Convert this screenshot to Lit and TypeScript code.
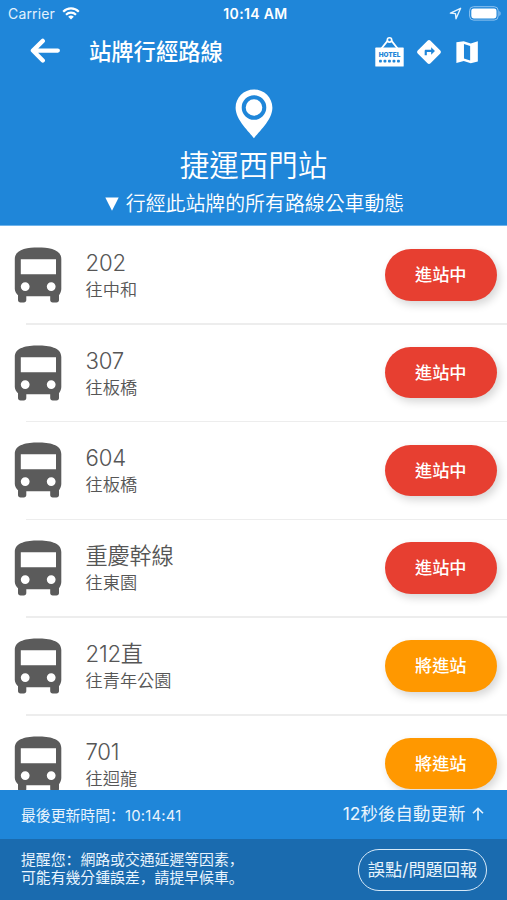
import { LitElement, html, css, svg } from "lit";
import { customElement, property } from "lit/decorators.js";

const textStack = css`Inter, "Noto Sans CJK TC", sans-serif`;

interface Route {
  name: string;
  dest: string;
  status: "arriving" | "soon";
}

const ROUTES: Route[] = [
  { name: "202", dest: "往中和", status: "arriving" },
  { name: "307", dest: "往板橋", status: "arriving" },
  { name: "604", dest: "往板橋", status: "arriving" },
  { name: "重慶幹線", dest: "往東園", status: "arriving" },
  { name: "212直", dest: "往青年公園", status: "soon" },
  { name: "701", dest: "往迴龍", status: "soon" },
];

@customElement("status-bar")
export class StatusBar extends LitElement {
  static styles = css`
    :host {
      display: grid;
      grid-template-columns: 1fr auto 1fr;
      align-items: center;
      height: 27px;
      padding: 0 6px 0 8px;
      color: #fff;
      font-family: ${textStack};
      font-size: 14px;
    }
    .left, .right { display: flex; align-items: center; }
    .left { gap: 7px; color: #e2f1fd; }
    .carrier { letter-spacing: 0.15px; }
    .right { justify-content: flex-end; gap: 7px; }
    .time { font-weight: 600; font-size: 14px; letter-spacing: 0.35px; padding-left: 2px; }
    svg { display: block; }
  `;
  render() {
    return html`
      <div class="left">
        <span class="carrier">Carrier</span>
        <svg width="18" height="13" viewBox="0 0 18 13" fill="none" stroke="#fff">
          <path d="M1.2 4.7a11 11 0 0 1 15.6 0" stroke-width="2.2" />
          <path d="M4 7.7a7.1 7.1 0 0 1 10 0" stroke-width="2.1" />
          <path d="M9 12.6 6.2 9.8a4 4 0 0 1 5.6 0Z" fill="#fff" stroke="none" />
        </svg>
      </div>
      <span class="time">10:14 AM</span>
      <div class="right">
        <svg width="13" height="13" viewBox="0 0 13 13">
          <path d="M11.6 1.3 1.4 6.1l5.1.5.5 5.1Z" fill="none" stroke="#e6f3fd" stroke-width="1.4" stroke-linejoin="round" />
        </svg>
        <svg width="32" height="15" viewBox="0 0 32 15">
          <rect x=".6" y=".7" width="28.6" height="13.4" rx="4" fill="none" stroke="#8fc3ef" stroke-width="1" />
          <rect x="2.3" y="2.4" width="25.2" height="10" rx="2.4" fill="#fff" />
          <path d="M30.3 5v5c1.8-.8 1.8-4.2 0-5Z" fill="#8fc3ef" />
        </svg>
      </div>
    `;
  }
}

@customElement("nav-bar")
export class NavBar extends LitElement {
  static styles = css`
    :host {
      display: flex;
      align-items: center;
      height: 50px;
      padding: 0 27px 0 30px;
      color: #fff;
      font-family: ${textStack};
    }
    svg { display: block; }
    .title { margin: 0 auto 0 29px; font-size: 22.3px; font-weight: 500; line-height: 30px; }
    .arrow { margin-top: -2px; }
    .actions { display: flex; align-items: center; gap: 12px; }
    .sign { font: 900 6.4px Inter, sans-serif; }
  `;
  render() {
    return html`
      <svg class="arrow" width="30" height="26" viewBox="0 0 30 26" fill="none" stroke="#fff" stroke-width="4.3" stroke-linecap="round" stroke-linejoin="round">
        <path d="M27.8 12.6H3.2M12.8 2.9 2.9 12.6l9.9 9.9" />
      </svg>
      <span class="title">站牌行經路線</span>
      <div class="actions">
        <svg width="29" height="32" viewBox="0 0 29 32">
          <path d="M6 13 12.9 4.4M23 13 16.2 4.4" stroke="#fff" stroke-width="1.8" />
          <circle cx="14.5" cy="3.9" r="2.2" fill="none" stroke="#fff" stroke-width="1.6" />
          <rect x=".3" y="11.6" width="28.4" height="19" rx=".6" fill="#fff" />
          <text class="sign" x="14.5" y="20.9" text-anchor="middle" textLength="21.6" fill="#1f86d9">HOTEL</text>
          <g fill="#1f86d9">
            ${[4, 8.5, 13, 17.5, 22].map((x) => svg`<rect x=${x} y="23.8" width="2.9" height="2.6" rx=".9" />`)}
          </g>
        </svg>
        <svg width="26" height="26" viewBox="0 0 24 24" fill="#fff">
          <path d="M22.43 10.59l-9.01-9.01c-.75-.75-2.07-.76-2.83 0l-9 9c-.78.78-.78 2.04 0 2.82l9 9c.39.39.9.58 1.41.58.51 0 1.02-.19 1.41-.58l8.98-8.98c.79-.76.8-2.02.04-2.83zM14 14.5V12h-4v3H8v-4c0-.55.45-1 1-1h5V7.500l3.500 3.500-3.500 3.500z" />
        </svg>
        <svg width="26" height="26" viewBox="0 0 24 26" preserveAspectRatio="none" fill="#fff">
          <path fill-rule="evenodd" d="M2.200 3.200 9 2.200 15.500 4.500 22 2.200V22.500L15.500 24.300 9 22 2.200 24ZM9.200 5V19.400L14.900 21.500V7Z" />
        </svg>
      </div>
    `;
  }
}

@customElement("stop-header")
export class StopHeader extends LitElement {
  static styles = css`
    :host {
      display: flex;
      flex-direction: column;
      align-items: center;
      height: 149px;
      box-sizing: border-box;
      padding-top: 11.5px;
      border-bottom: 1px solid #6fb3ea;
      color: #fff;
      font-family: ${textStack};
    }
    svg { display: block; }
    .name { margin-top: 6px; font-size: 29.5px; line-height: 40px; font-weight: 350; }
    .sub {
      display: flex;
      align-items: center;
      gap: 7px;
      margin-top: 5px;
      padding-left: 2px;
      font-size: 19.9px;
      line-height: 28px;
      font-weight: 350;
    }
  `;
  render() {
    return html`
      <svg width="38" height="50" viewBox="0 0 38 50">
        <path fill="#fff" d="M19 .4C8.700.4.600 8.500.600 18.700.600 31 15 43.500 19 49.300 23 43.500 37.400 31 37.400 18.700 37.400 8.500 29.300.4 19 .4Z" />
        <circle cx="19" cy="18.500" r="10.300" fill="#fff" stroke="#1f86d9" stroke-width="4" />
      </svg>
      <span class="name">捷運西門站</span>
      <div class="sub">
        <svg width="14" height="14" viewBox="0 0 14 14"><path d="M.3.500H13.700L7 13.800Z" fill="#fff" /></svg>
        <span>行經此站牌的所有路線公車動態</span>
      </div>
    `;
  }
}

@customElement("route-row")
export class RouteRow extends LitElement {
  @property() name = "";
  @property() dest = "";
  @property() status = "arriving";

  static styles = css`
    :host {
      display: flex;
      flex: none;
      flex-direction: column;
      height: 97.75px;
      font-family: ${textStack};
      color: #565656;
    }
    .body { display: flex; flex: 1; align-items: center; padding: 0 10px 0 14px; }
    svg { display: block; }
    .info { display: flex; flex-direction: column; flex: 1; margin-left: 23.5px; }
    .name { font-size: 22.2px; line-height: 29px; font-weight: 350; letter-spacing: -0.2px; }
    .dest { font-size: 17.2px; line-height: 25px; font-weight: 350; }
    .pill {
      width: 112.5px;
      height: 51.5px;
      border-radius: 26px;
      background: #e73f31;
      color: #fff;
      font-size: 17.2px;
      font-weight: 500;
      line-height: 51px;
      text-align: center;
      box-shadow: 3px 4px 8px rgba(0, 0, 0, 0.16);
    }
    .soon { background: #ff9800; }
    .line { height: 1.5px; margin-left: 26px; background: #ededed; }
  `;
  render() {
    return html`
      <div class="body">
        <svg width="48" height="56" viewBox="0 0 48 56">
          <path fill="#5b5b5b" fill-rule="evenodd" d="M24 .6C35 .6 47.300 2.500 47.300 12V42C47.300 44.500 46 46.700 45 48.200V53C45 54.500 44 55.500 42.500 55.500H38.700C37.200 55.500 36.200 54.500 36.200 53V49.300H12.300V53C12.300 54.500 11.300 55.500 9.800 55.500H6.500C5 55.500 4 54.500 4 53V48.200C2.500 46.700.800 44.500.800 42V12C.8 2.500 13 .6 24 .6ZM6.800 12.200V27.200H42V12.200ZM11.200 35.200a4.400 4.400 0 1 0 0 8.800a4.400 4.400 0 1 0 0-8.800ZM37.200 35.200a4.400 4.400 0 1 0 0 8.800a4.400 4.400 0 1 0 0-8.800Z" />
        </svg>
        <div class="info">
          <span class="name">${this.name}</span>
          <span class="dest">${this.dest}</span>
        </div>
        <div class="pill ${this.status}">${this.status === "soon" ? "將進站" : "進站中"}</div>
      </div>
      <div class="line"></div>
    `;
  }
}

@customElement("app-footer")
export class AppFooter extends LitElement {
  static styles = css`
    :host { display: block; color: #e9f4fd; font-family: ${textStack}; }
    .update {
      display: flex;
      align-items: center;
      justify-content: space-between;
      height: 49px;
      padding: 0 23.5px 0 21px;
      background: #1f86d9;
    }
    .last { font-size: 14.85px; }
    .clock { letter-spacing: 0.2px; }
    .next { display: flex; align-items: center; gap: 6px; font-size: 17.4px; letter-spacing: 0.1px; line-height: 24px; padding-bottom: 1px; }
    .notice {
      display: flex;
      align-items: center;
      justify-content: space-between;
      height: 61px;
      padding: 0 20px 0 21px;
      background: #1a6baf;
    }
    .text { font-size: 14.85px; line-height: 17.5px; white-space: nowrap; }
    .text div { height: 17.5px; }
    .p { font-family: "Noto Sans CJK SC", sans-serif; line-height: 1; }
    .report {
      box-sizing: border-box;
      width: 129px;
      height: 42px;
      border: 1.5px solid #d6e9f8;
      border-radius: 21px;
      font-size: 17.2px;
      line-height: 39px;
      text-align: center;
      white-space: nowrap;
    }
    svg { display: block; }
  `;
  render() {
    const p = (c: string) => html`<span class="p" lang="zh-Hans">${c}</span>`;
    return html`
      <div class="update">
        <span class="last">最後更新時間${p("：")}<span class="clock">10:14:41</span></span>
        <div class="next">
          <span>12秒後自動更新</span>
          <svg width="12" height="14" viewBox="0 0 12 14" fill="none" stroke="#e9f4fd" stroke-width="1.600"><path d="M6 13.500V1.500M1 6.300 6 1.300 11 6.300" /></svg>
        </div>
      </div>
      <div class="notice">
        <div class="text">
          <div>提醒您${p("：")}網路或交通延遲等因素${p("，")}</div>
          <div>可能有幾分鍾誤差${p("，")}請提早候車${p("。")}</div>
        </div>
        <div class="report">誤點/問題回報</div>
      </div>
    `;
  }
}

@customElement("app-root")
export class AppRoot extends LitElement {
  static styles = css`
    :host { display: flex; flex-direction: column; height: 900px; overflow: hidden; background: #fff; }
    .top { flex: none; background: #1f86d9; }
    .list { display: flex; flex-direction: column; flex: 1; min-height: 0; overflow: hidden; padding-top: 0.75px; }
    app-footer { flex: none; }
  `;
  render() {
    return html`
      <div class="top">
        <status-bar></status-bar>
        <nav-bar></nav-bar>
        <stop-header></stop-header>
      </div>
      <div class="list">
        ${ROUTES.map((r) => html`<route-row .name=${r.name} .dest=${r.dest} .status=${r.status}></route-row>`)}
      </div>
      <app-footer></app-footer>
    `;
  }
}
